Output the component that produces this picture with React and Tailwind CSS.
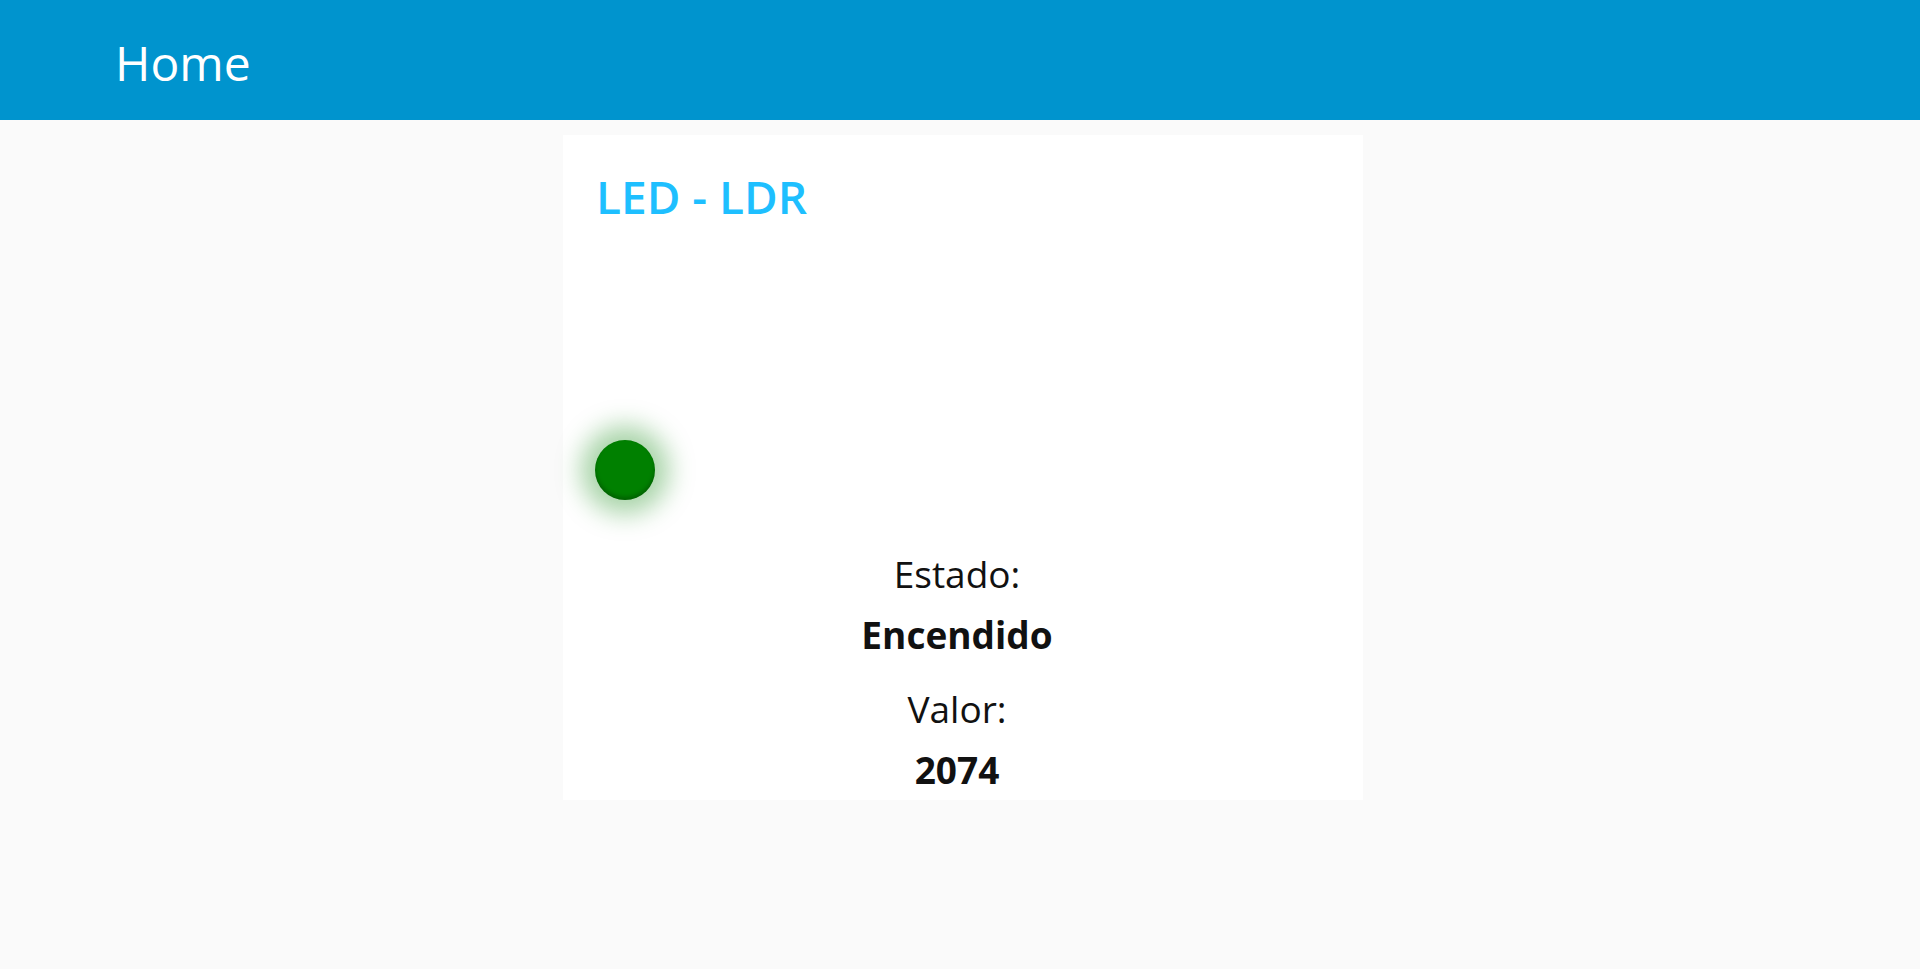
import React from 'react';

const font = { fontFamily: '"Open Sans", "Noto Sans", sans-serif' };

export default function App() {
  return (
    <div className="min-h-[969px] bg-[#fafafa]" style={font}>
      {/* Toolbar */}
      <header className="h-[120px] bg-[#0094ce] flex items-center pl-[115px]">
        <h1 className="text-white text-[48px] leading-none font-normal pt-[5px]">Home</h1>
      </header>

      {/* Group card */}
      <div className="ml-[563px] mt-[15px] w-[800px] h-[665px] bg-white flex flex-col">
        <h2 className="text-[#1ebfff] text-[46px] leading-[56px] font-semibold pl-[33px] pt-[33px]">LED - LDR</h2>

        <div className="h-[279px] flex items-end pl-[32px]">
          <div className="w-[60px] h-[60px] rounded-full bg-[#008000] shadow-[0_0_26px_14px_rgba(0,128,0,0.35),inset_0_-3px_4px_rgba(0,0,0,0.25)]" />
        </div>

        <div className="flex flex-col items-center text-[#111] mt-[43px] pr-[12px]">
          <span className="text-[37px] leading-[61px] font-normal">Estado:</span>
          <span className="text-[37px] leading-[61px] font-bold">Encendido</span>
          <span className="text-[37px] leading-[61px] font-normal mt-[13px]">Valor:</span>
          <span className="text-[37px] leading-[61px] font-bold">2074</span>
        </div>
      </div>
    </div>
  );
}
